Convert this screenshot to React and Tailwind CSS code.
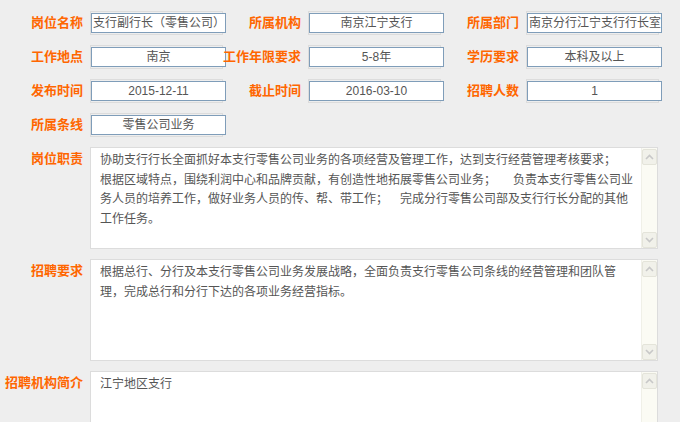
import React from "react";

const FONT = { fontFamily: '"Liberation Sans", "Noto Sans CJK SC", sans-serif' };

const rows = [
  [
    ["岗位名称", "支行副行长（零售公司）", "left"],
    ["所属机构", "南京江宁支行", "center"],
    ["所属部门", "南京分行江宁支行行长室", "left"],
  ],
  [
    ["工作地点", "南京", "center"],
    ["工作年限要求", "5-8年", "center"],
    ["学历要求", "本科及以上", "center"],
  ],
  [
    ["发布时间", "2015-12-11", "center"],
    ["截止时间", "2016-03-10", "center"],
    ["招聘人数", "1", "center"],
  ],
  [["所属条线", "零售公司业务", "center"]],
];

function Label({ children }) {
  return (
    <div className="flex justify-end pr-[7px] h-[24px] items-center">
      <span className="shrink-0 whitespace-nowrap text-[13px] font-bold text-[#ff6600] leading-none -mt-[2px]">
        {children}
      </span>
    </div>
  );
}

function Field({ value, align }) {
  return (
    <div className="w-[133px] h-[24px] border border-[#dcdcdc]">
      <div
        className={
          "w-[135px] h-[20px] mt-[1px] bg-white border border-[#7f9db9] px-[1px] overflow-hidden whitespace-nowrap text-[12px] leading-[18px] text-[#555] " +
          (align === "left" ? "text-left" : "text-center")
        }
      >
        {value}
      </div>
    </div>
  );
}

function Arrow({ up }) {
  return (
    <div className="w-[15px] h-[16px] rounded-[2px] border border-[#e4e4da] bg-[#f1f1ea] flex items-center justify-center">
      <svg width="9" height="6" viewBox="0 0 9 6">
        <path
          d={up ? "M1 5 L4.5 1.5 L8 5" : "M1 1 L4.5 4.5 L8 1"}
          fill="none"
          stroke="#c8c8c8"
          strokeWidth="1.6"
        />
      </svg>
    </div>
  );
}

function Gap({ w }) {
  return <span className="inline-block" style={{ width: w }} />;
}

function TextBox({ label, lines }) {
  return (
    <div className="flex mb-[10px]">
      <div className="w-[90px] shrink-0 flex justify-end pr-[7px] pt-[5px]">
        <span className="shrink-0 whitespace-nowrap text-[13px] font-bold text-[#ff6600] leading-none">
          {label}
        </span>
      </div>
      <div className="w-[568px] h-[102px] shrink-0 border border-[#dcdcdc] bg-white flex">
        <div className="flex-1 pl-[9px] pt-[3px] text-[12px] leading-[19.5px] text-[#555] whitespace-pre overflow-hidden">
          {lines.map((l, i) => (
            <div key={i}>{l}</div>
          ))}
        </div>
        <div className="w-[16px] shrink-0 bg-[#fbfbf4] border-l border-[#f0f0e8] flex flex-col justify-between pt-[1px] pb-[0px]">
          <Arrow up />
          <Arrow />
        </div>
      </div>
    </div>
  );
}

export default function App() {
  return (
    <div className="w-[680px] h-[422px] overflow-hidden bg-[#eeeeee]" style={FONT}>
      <div className="pt-[11px]">
        {rows.map((row, i) => (
          <div key={i} className="grid grid-cols-[90px_136px_82px_136px_82px_136px] h-[34px] items-start">
            {row.map(([label, value, align]) => (
              <React.Fragment key={label}>
                <Label>{label}</Label>
                <Field value={value} align={align} />
              </React.Fragment>
            ))}
          </div>
        ))}
      </div>
      <TextBox
        label="岗位职责"
        lines={[
          "协助支行行长全面抓好本支行零售公司业务的各项经营及管理工作，达到支行经营管理考核要求；",
          <>根据区域特点，围绕利润中心和品牌贡献，有创造性地拓展零售公司业务；<Gap w={17} />负责本支行零售公司业</>,
          <>务人员的培养工作，做好业务人员的传、帮、带工作；<Gap w={12} />完成分行零售公司部及支行行长分配的其他</>,
          "工作任务。",
        ]}
      />
      <TextBox
        label="招聘要求"
        lines={[
          "根据总行、分行及本支行零售公司业务发展战略，全面负责支行零售公司条线的经营管理和团队管",
          "理，完成总行和分行下达的各项业务经营指标。",
        ]}
      />
      <TextBox label="招聘机构简介" lines={["江宁地区支行"]} />
    </div>
  );
}
